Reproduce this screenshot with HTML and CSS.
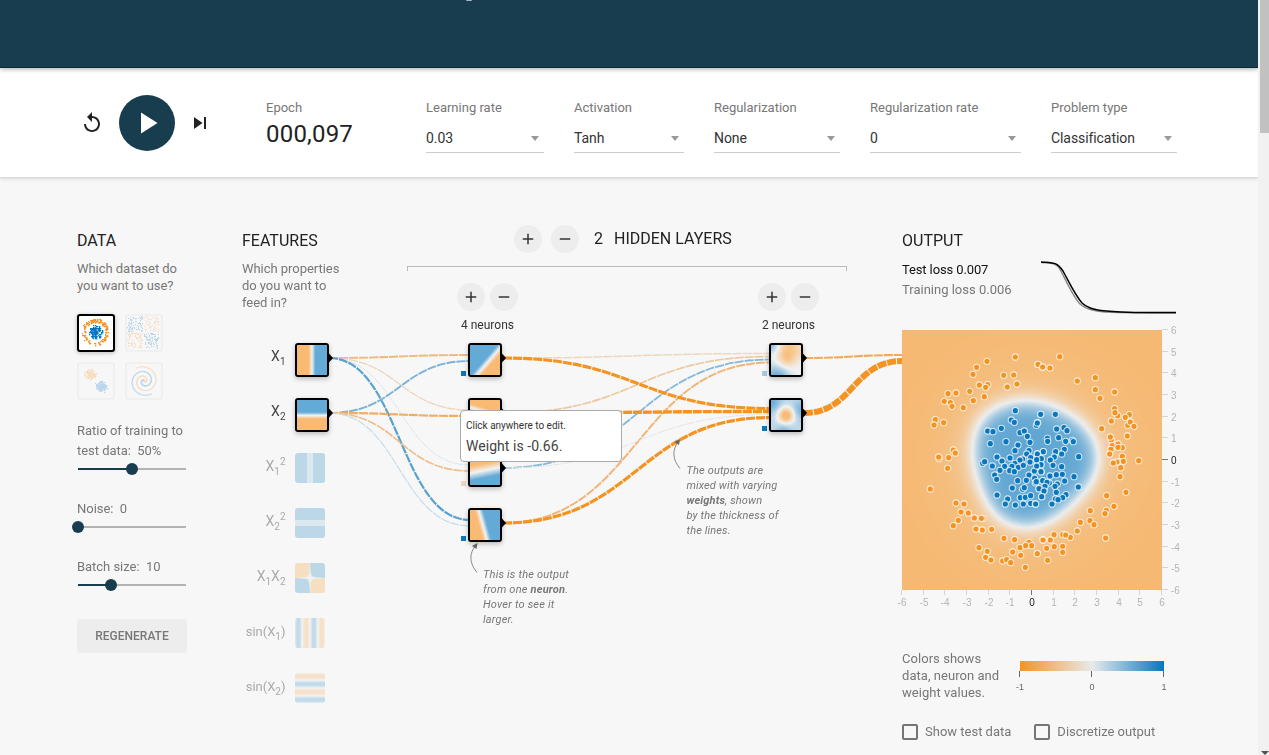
FILE: index.html
```html
<!DOCTYPE html>
<html lang="en">
<head>
<meta charset="utf-8">
<title>Neural network playground</title>
<link rel="stylesheet" href="styles.css">
</head>
<body>
<div class="page">
  <div class="content">
    <header class="banner"><span class="banner-tail"></span></header>

    <section class="controls">
      <div class="timeline">
        <svg class="icon" viewBox="0 0 24 24"><path d="M12 5V1L7 6l5 5V7c3.31 0 6 2.690 6 6s-2.690 6-6 6-6-2.690-6-6H4c0 4.420 3.580 8 8 8s8-3.580 8-8-3.580-8-8-8z"/></svg>
        <div class="play"><svg viewBox="0 0 24 24"><path d="M8 5v14l11-7z"/></svg></div>
        <svg class="icon skip" viewBox="0 0 24 24"><path d="M6 18l8.500-6L6 6v12zM16 6v12h2V6h-2z"/></svg>
      </div>
      <div class="epoch"><span class="label">Epoch</span><span class="epoch-value">000,097</span></div>
      <div class="selects">
        <div class="control w-rate"><span class="label">Learning rate</span><div class="select">0.03<i class="caret"></i></div></div>
        <div class="control w-act"><span class="label">Activation</span><div class="select">Tanh<i class="caret"></i></div></div>
        <div class="control w-reg"><span class="label">Regularization</span><div class="select">None<i class="caret"></i></div></div>
        <div class="control w-regrate"><span class="label">Regularization rate</span><div class="select">0<i class="caret"></i></div></div>
        <div class="control w-type"><span class="label">Problem type</span><div class="select">Classification<i class="caret"></i></div></div>
      </div>
    </section>

    <main class="main">
      <section class="data">
        <h4>Data</h4>
        <p>Which dataset do you want to use?</p>
        <div class="datasets">
          <canvas class="dataset selected" data-set="circle" width="34" height="34"></canvas>
          <canvas class="dataset" data-set="xor" width="34" height="34"></canvas>
          <canvas class="dataset" data-set="gauss" width="34" height="34"></canvas>
          <canvas class="dataset" data-set="spiral" width="34" height="34"></canvas>
        </div>
        <div class="slider-block"><label>Ratio of training to test data:&nbsp; 50%</label><div class="slider"><div class="fill" style="width:50%"></div><div class="knob"></div></div></div>
        <div class="slider-block"><label>Noise:&nbsp; 0</label><div class="slider"><div class="fill" style="width:0%"></div><div class="knob"></div></div></div>
        <div class="slider-block"><label>Batch size:&nbsp; 10</label><div class="slider"><div class="fill" style="width:31%"></div><div class="knob"></div></div></div>
        <button class="regenerate">Regenerate</button>
      </section>

      <section class="network">
        <div class="network-head">
          <div class="features-head">
            <h4>Features</h4>
            <p>Which properties do you want to feed in?</p>
          </div>
          <div class="layers-head">
            <div class="layers-title">
              <span class="round"><svg viewBox="0 0 24 24"><path d="M19 13h-6v6h-2v-6H5v-2h6V5h2v6h6v2z"/></svg></span>
              <span class="round"><svg viewBox="0 0 24 24"><path d="M19 13H5v-2h14v2z"/></svg></span>
              <h4 class="count">2</h4><h4>Hidden layers</h4>
            </div>
            <div class="bracket"></div>
            <div class="layer-controls">
              <div class="layer-control">
                <div class="pair">
                  <span class="round small"><svg viewBox="0 0 24 24"><path d="M19 13h-6v6h-2v-6H5v-2h6V5h2v6h6v2z"/></svg></span>
                  <span class="round small"><svg viewBox="0 0 24 24"><path d="M19 13H5v-2h14v2z"/></svg></span>
                </div>
                <span>4 neurons</span>
              </div>
              <div class="layer-control">
                <div class="pair">
                  <span class="round small"><svg viewBox="0 0 24 24"><path d="M19 13h-6v6h-2v-6H5v-2h6V5h2v6h6v2z"/></svg></span>
                  <span class="round small"><svg viewBox="0 0 24 24"><path d="M19 13H5v-2h14v2z"/></svg></span>
                </div>
                <span>2 neurons</span>
              </div>
            </div>
          </div>
        </div>
        <div class="diagram">
          <svg class="links" width="660" height="420" viewBox="242 335 660 420">
            <g id="links"></g>
            <g id="marks"></g>
            <g class="feature-label">
              <text x="285.500" y="361" text-anchor="end">X<tspan class="sub" dy="4">1</tspan></text>
              <text x="285.500" y="416" text-anchor="end">X<tspan class="sub" dy="4">2</tspan></text>
              <g class="off">
                <text x="285.500" y="471" text-anchor="end">X<tspan class="sub" dy="4">1</tspan><tspan class="sub" dy="-10">2</tspan></text>
                <text x="285.500" y="526" text-anchor="end">X<tspan class="sub" dy="4">2</tspan><tspan class="sub" dy="-10">2</tspan></text>
                <text x="285.500" y="581" text-anchor="end">X<tspan class="sub" dy="4">1</tspan><tspan dy="-4">X</tspan><tspan class="sub" dy="4">2</tspan></text>
                <text x="285.500" y="636" text-anchor="end" class="sin">sin(X<tspan class="sub" dy="4">1</tspan><tspan dy="-4">)</tspan></text>
                <text x="285.500" y="691" text-anchor="end" class="sin">sin(X<tspan class="sub" dy="4">2</tspan><tspan dy="-4">)</tspan></text>
              </g>
            </g>
            <g class="arrow">
              <path d="M477 572.500C469 563 469 553 476 545"/><path class="head" d="M477.500 543l-1 6-4.500-3z"/>
              <path d="M680 468.500C672 459 672 449 679 441"/><path class="head" d="M680 439l-1 6-4.500-3z"/>
            </g>
          </svg>
          <div id="nodes"></div>
          <div class="callout neuron-note">This is the output<br>from one <b>neuron</b>.<br>Hover to see it<br>larger.</div>
          <div class="callout weight-note">The outputs are<br>mixed with varying<br><b>weights</b>, shown<br>by the thickness of<br>the lines.</div>
          <div class="hovercard"><span>Click anywhere to edit.</span><span class="value">Weight is -0.66.</span></div>
        </div>
      </section>

      <section class="output">
        <h4>Output</h4>
        <div class="loss">
          <div class="loss-text"><span class="test">Test loss 0.007</span><span>Training loss 0.006</span></div>
          <svg class="loss-chart" width="136" height="54" viewBox="0 0 136 54">
            <path class="train" d="M0 2.500C12 3 16 3 20 11C27 25 33 38 39 44C46 50 54 51 64 52C90 53 110 53 135 53"/>
            <path class="test" d="M0 2C13 3 16 2 22 11C29 24 34 35 41 43C48 50 60 51 80 52C100 53 115 52.500 135 52.500"/>
          </svg>
        </div>
        <div class="plot">
          <canvas id="heatmap" width="130" height="130"></canvas>
          <svg class="plot-overlay" width="290" height="285" viewBox="0 0 290 285"><g id="points"></g><g id="axes"></g></svg>
        </div>
        <div class="legend">
          <p>Colors shows data, neuron and weight values.</p>
          <svg width="160" height="38" viewBox="0 0 160 38">
            <defs><linearGradient id="scale"><stop offset="0" stop-color="#f59322"/><stop offset=".5" stop-color="#e8eaeb"/><stop offset="1" stop-color="#0877bd"/></linearGradient></defs>
            <rect x="8" y="4" width="144" height="10" fill="url(#scale)"/>
            <path d="M7.500 14v6M79.500 14v6M151.500 14v6" stroke="#666"/>
            <text x="8" y="33">-1</text><text x="80" y="33">0</text><text x="152" y="33">1</text>
          </svg>
        </div>
        <div class="checks">
          <span class="check"><i></i>Show test data</span>
          <span class="check"><i></i>Discretize output</span>
        </div>
      </section>
    </main>
  </div>
  <div class="scrollbar"><div class="thumb"></div><div class="down"></div></div>
</div>
<script src="script.js"></script>
</body>
</html>
```
FILE: styles.css
```css
* { box-sizing: border-box; }
body { margin: 0; font-family: Roboto, "Liberation Sans", sans-serif; font-size: 13px; color: #777; background: #f7f7f7; overflow: hidden; }
h4 { margin: 0; font-weight: 400; font-size: 16px; line-height: 20px; color: #222; text-transform: uppercase; }
p { margin: 0; line-height: 17px; }
.page { display: flex; height: 755px; }
.content { flex: 1; display: flex; flex-direction: column; min-width: 0; }

.banner { height: 68px; background: #183d4e; border-bottom: 1px solid #0d2a38; box-shadow: 0 1px 5px rgba(0,0,0,.35); position: relative; z-index: 2; }
.banner-tail { display: block; width: 6px; height: 1px; margin-left: 466px; background: #a9b6bd; border-radius: 0 0 3px 3px; }

.controls { height: 110px; display: flex; background: #fff; border-bottom: 1px solid #d9d9d9; box-shadow: 0 1px 4px rgba(0,0,0,.12); position: relative; padding-left: 80px; }
.timeline { width: 186px; height: 110px; display: flex; align-items: center; }
.icon { width: 24px; height: 24px; fill: #222; }
.icon.skip { margin-left: 13px; }
.play { width: 56px; height: 56px; margin-left: 15px; border-radius: 50%; background: #183d4e; display: flex; align-items: center; justify-content: center; }
.play svg { width: 36px; height: 36px; fill: #fff; margin-left: -1px; }
.label { display: block; line-height: 16px; color: #777; }
.epoch { width: 160px; padding-top: 32px; }
.epoch-value { display: block; font-size: 24px; line-height: 28px; margin-top: 4px; color: #222; letter-spacing: .2px; font-weight: 400; }
.selects { display: flex; gap: 30px; padding-top: 32px; }
.select { display: flex; align-items: center; justify-content: space-between; height: 30px; margin-top: 7px; border-bottom: 1px solid #ccc; color: #333; font-size: 14px; letter-spacing: -.08px; padding: 1px 5px 0 0; }
.caret { border: 4.500px solid transparent; border-top-color: #999; border-bottom: 0; border-top-width: 5px; margin-top: 1px; }
.w-rate { width: 118px; } .w-act { width: 110px; } .w-reg { width: 126px; } .w-regrate { width: 151px; } .w-type { width: 126px; }

.main { flex: 1; display: grid; grid-template-columns: 110px 660px 276px; padding: 53px 0 0 77px; min-height: 0; }
.data { width: 110px; }
.data p, .features-head p { margin-top: 9px; letter-spacing: -.04px; }
.datasets { display: grid; grid-template-columns: 38px 38px; gap: 10px; margin-top: 20px; }
.dataset { width: 38px; height: 38px; border: 2px solid #d8d8d8; border-radius: 3px; opacity: .25; }
.dataset.selected { opacity: 1; border-color: #000; background: #fff; box-shadow: 0 1px 4px rgba(0,0,0,.25); }
.slider-block { height: 58px; }
.datasets + .slider-block { margin-top: 21px; height: 78px; }
label { display: block; line-height: 20px; width: 112px; letter-spacing: -.03px; }
.slider { display: flex; align-items: center; height: 12px; margin: 2px 0 0 1px; width: 108px; background: linear-gradient(#b3b3b3, #b3b3b3) center / 100% 2px no-repeat; }
.fill { height: 2px; background: #183d4e; }
.knob { width: 12px; height: 12px; margin: 0 -6px; border-radius: 50%; background: #183d4e; flex: none; }
.regenerate { display: block; width: 110px; height: 34px; margin-top: 4px; border: 0; border-radius: 2px; background: #ededed; color: #777; font: 500 12px Roboto, sans-serif; text-transform: uppercase; }

.network { margin-left: 55px; }
.network-head { height: 104px; display: flex; }
.features-head { width: 165px; }
.features-head p { width: 104px; }
.layers-head { width: 440px; margin-top: -6px; }
.layers-title { display: flex; align-items: center; height: 28px; padding-left: 107px; }
.round { flex: none; width: 28px; height: 28px; border-radius: 50%; background: #ededed; display: flex; align-items: center; justify-content: center; margin-right: 9px; }
.round svg { width: 18px; height: 18px; fill: #333; }
.round.small { margin: 0; }
.count { margin: 0 11px 0 6px; }
.bracket { height: 5px; margin-top: 13px; border: 1px solid #bbb; border-bottom: 0; }
.layer-controls { display: flex; justify-content: space-between; padding: 12px 28px 0 50px; color: #444; font-size: 12px; text-align: center; }
.layer-control { width: 61px; white-space: nowrap; }
.layer-control > span { display: block; line-height: 14px; margin-top: 7px; color: #333; }
.pair { display: flex; gap: 5px; justify-content: center; }
.diagram { position: relative; width: 660px; height: 420px; }
.links { position: absolute; left: 0; top: 0; overflow: visible; }
#links path { fill: none; stroke-dasharray: 9 1; }
.feature-label { font-size: 14px; fill: #444; }
.sub { font-size: 10px; }
.sin { font-size: 13px; }
.off { fill: #aaa; }
.arrow path { fill: none; stroke: #888; }
.arrow .head { fill: #666; stroke: none; }
.node { position: absolute; width: 34px; height: 34px; border: 2px solid #000; border-radius: 3px; box-shadow: 0 2px 5px rgba(0,0,0,.25); background: #fff; }
.node.off-node { width: 30px; height: 30px; border: 0; box-shadow: none; opacity: .4; background: none; }
.callout { position: absolute; font: italic 11px/15px Roboto, sans-serif; letter-spacing: .14px; color: #777; white-space: nowrap; }
.neuron-note { left: 241px; top: 232px; letter-spacing: .2px; }
.weight-note { left: 444.500px; top: 128px; }
.hovercard { position: absolute; left: 218px; top: 75px; width: 162px; height: 52px; padding: 7px 5px; border: 1px solid #aaa; border-radius: 4px; background: #fff; color: #333; font-size: 10px; line-height: 16px; }
.hovercard span { display: block; }
.hovercard .value { font-size: 14px; line-height: 24px; color: #444; letter-spacing: .05px; }

.output { margin-left: 55px; width: 276px; }
.loss { display: flex; justify-content: space-between; height: 79px; padding-top: 9px; }
.loss-text { line-height: 20px; white-space: nowrap; }
.loss-text span { display: block; }
.loss-text .test { color: #111; letter-spacing: -.12px; }
.loss-chart { margin: 0 1px 0 0; }
.loss-chart path { fill: none; stroke-width: 1.500; }
.loss-chart .train { stroke: #888; }
.loss-chart .test { stroke: #000; }
.plot { display: grid; width: 290px; height: 285px; }
.plot > * { grid-area: 1 / 1; }
#heatmap { width: 260px; height: 260px; }
.plot-overlay { overflow: visible; }
#axes text { font: 10px "Liberation Sans", sans-serif; fill: #b5b5b5; }
#axes line { stroke: #d5d5d5; }
#axes text.zero { fill: #222; }
#axes line.zero { stroke: #777; }
#points circle { stroke: #fff; stroke-opacity: .75; stroke-width: 1.100; }
.legend { display: flex; gap: 10px; padding-top: 35px; height: 88px; }
.legend p { width: 100px; letter-spacing: .05px; }
.legend svg { margin-top: 7px; font: 9px "Liberation Sans", sans-serif; fill: #666; text-anchor: middle; }
.checks { display: flex; gap: 22px; margin-top: 20px; }
.check { display: flex; align-items: center; gap: 7px; height: 18px; white-space: nowrap; line-height: 16px; padding-right: 1px; }
.check i { width: 16px; height: 16px; border: 2px solid #757575; border-radius: 2px; }

.scrollbar { width: 11px; background: #f1f1f1; display: flex; flex-direction: column; justify-content: space-between; align-items: flex-end; z-index: 3; }
.thumb { width: 9px; height: 133px; background: #c1c1c1; }
.down { border: 4px solid transparent; border-top-color: #505050; border-bottom: 0; }
```
FILE: script.js
```javascript
const NS = 'http://www.w3.org/2000/svg';
const LOW = [245, 147, 34], MID = [232, 234, 235], HIGH = [8, 119, 189];

function add(parent, name, attrs, text) {
  const el = document.createElementNS(NS, name);
  for (const k in attrs) el.setAttribute(k, attrs[k]);
  if (text !== undefined) el.textContent = text;
  parent.appendChild(el);
  return el;
}
function color(v) {
  v = Math.max(-1, Math.min(1, v));
  const end = v < 0 ? LOW : HIGH;
  return MID.map((m, i) => m + (end[i] - m) * Math.abs(v));
}
// Paints f(x, y) with x and y in [-6, 6], y pointing up.
function paint(canvas, f) {
  const n = canvas.width, ctx = canvas.getContext('2d'), img = ctx.createImageData(n, n);
  for (let j = 0; j < n; j++) for (let i = 0; i < n; i++) {
    const c = color(f((i + .5) / n * 12 - 6, 6 - (j + .5) / n * 12)), p = (j * n + i) * 4;
    img.data[p] = c[0]; img.data[p + 1] = c[1]; img.data[p + 2] = c[2]; img.data[p + 3] = 160;
  }
  ctx.putImageData(img, 0, 0);
}
const g = (x, y, cx, cy, s) => Math.exp(-((x - cx) ** 2 + (y - cy) ** 2) / (s * s));

// Nodes: left, top, response function, active flag.
const nodes = [
  [295, 343, (x) => x * .75, 1], [295, 398, (x, y) => (y + .2) * .75, 1],
  [295, 453, (x) => Math.abs(x) < 1.3 ? .4 : 1, 0],
  [295, 508, (x, y) => Math.abs(y) < 1.3 ? .4 : 1, 0],
  [295, 563, (x, y) => x * y * .8, 0],
  [295, 618, (x) => Math.sin(x) * .9, 0], [295, 673, (x, y) => Math.sin(y) * .9, 0],
  [468, 343, (x, y) => (y - x * 1.15 + 2.1) * .42, 1],
  [468, 398, (x, y) => -(y + x * .3 - 1.1) * .6, 1],
  [468, 453, (x, y) => -(y - x * .2 + .2) * .35, 1],
  [468, 508, (x, y) => (x + y * .28 + .8) * .6, 1],
  [769, 343, (x, y) => -.8 * g(x, y, .3, .8, 3.8) - .6 * g(x, y, 1, 6, 4) - .3 * g(x, y, 6, 4, 3.5) + .65 * g(x, y, -6, -7, 6) + .5 * g(x, y, -2, -7, 4) + .75 * g(x, y, -6, 6, 3), 1],
  [769, 398, (x, y) => .35 - 1.6 * g(x, y, 0, -.1, 3.1) + .6 * g(x, y, -6, 5, 4) + .5 * g(x, y, 6, 2, 3.5) + .5 * g(x, y, -1, -7, 3), 1]
];
const host = document.getElementById('nodes'), marks = document.getElementById('marks');
for (const [x, y, f, on] of nodes) {
  const c = document.createElement('canvas');
  c.width = c.height = 30;
  c.className = on ? 'node' : 'node off-node';
  c.style.left = (x - 242) + 'px';
  c.style.top = (y - 335) + 'px';
  host.appendChild(c);
  paint(c, f);
  if (on) add(marks, 'path', { d: `M${x + 33} ${y + 10.5}l1 0 4 4.500-4 4.500-1 0z`, fill: '#000' });
}
for (const [x, y, c] of [[461, 371, '#0877bd'], [461, 481, '#ecd9c4'], [461, 536, '#0877bd'], [762, 371, '#a5cbe1'], [762, 426, '#0877bd']])
  add(marks, 'rect', { x, y, width: 5, height: 5, fill: c });

// Links: x0, y0, x1, y1, colour, width.
const links = [
  [329, 358, 470, 355, '#efb87c', 1.9], [329, 358, 470, 410, '#edd4b8', 1.3], [329, 358, 470, 465, '#dce3e7', 1], [329, 358, 470, 520, '#59a1cf', 2.200],
  [329, 413, 470, 361, '#7bb3d6', 1.9], [329, 413, 470, 416, '#f1ad64', 2.200], [329, 413, 470, 471, '#efbf8b', 1.700], [329, 413, 470, 526, '#c5dbe8', 1.200],
  [503, 358, 771, 353.5, '#eed7bf', 1.500], [503, 413, 771, 356.5, '#ecc9a2', 1.700], [503, 468, 771, 359.5, '#84b8d9', 1.800], [503, 523, 771, 362.5, '#f0b577', 2],
  [503, 358, 771, 408.5, '#f59322', 3.100], [503, 413, 771, 411.500, '#f59322', 3.400], [503, 468, 771, 414.5, '#e1e6e6', 1], [503, 523, 771, 417.5, '#f59322', 3.200],
  [804, 358, 902, 355, '#f1aa58', 2.100], [804, 413, 902, 361, '#f59322', 6]
];
for (const [a, b, c, d, stroke, w] of links) {
  const m = (a + c) / 2;
  add(document.getElementById('links'), 'path', { d: `M${a} ${b}C${m} ${b} ${m} ${d} ${c} ${d}`, stroke, 'stroke-width': w });
}

// Decision boundary, in plot pixels.
const edge = [[130, 71], [100, 75], [83, 85], [75, 97], [71, 118], [75, 145], [83, 168], [96, 188], [114, 197], [135, 197], [153, 188], [176, 168], [193, 145], [197, 125], [190, 105], [173, 88], [153, 77]]
  .map(([x, y]) => [Math.atan2(y - 130, x - 130), Math.hypot(x - 130, y - 130)]).sort((a, b) => a[0] - b[0]);
function radius(t) {
  let i = edge.findIndex(e => e[0] > t);
  const n = edge.length;
  if (i < 0) i = 0;
  const a = edge[(i + n - 1) % n], b = edge[i], turn = 2 * Math.PI;
  const span = (b[0] - a[0] + turn) % turn, k = ((t - a[0] + turn) % turn) / span;
  return a[1] + (b[1] - a[1]) * k;
}
paint(document.getElementById('heatmap'), (x, y) => {
  const px = x / 12 * 260, py = -y / 12 * 260, t = Math.atan2(py, px);
  let r = 0;
  for (let k = -3; k <= 3; k++) {
    let a = t + k * .07;
    if (a > Math.PI) a -= 2 * Math.PI;
    if (a < -Math.PI) a += 2 * Math.PI;
    r += radius(a) / 7;
  }
  const d = r - Math.hypot(px, py);
  if (d > 0) return Math.tanh(d / 12);
  return -(.78 * Math.tanh(-d / 11) + .2 * Math.tanh(-d / 40));
});

// Samples, in thirds of a pixel, for the left and right part of the plot.
const orangeLeft = [[361,96],[276,109],[245,127],[234,148],[326,151],[356,150],[428,118],[442,127],[366,177],[337,186],[278,179],[272,187],[253,180],[224,199],[268,215],[235,227],[183,204],[159,206],[148,229],[166,233],[171,244],[205,248],[121,284],[117,300],[146,293],[175,375],[181,384],[161,398],[132,401],[131,396],[158,430],[106,492],[183,534],[207,537],[198,561],[220,564],[190,586],[175,602],[238,579],[264,580],[259,580],[243,612],[262,615],[290,613],[327,640],[359,644],[402,652],[444,645],[252,668],[277,679],[272,697],[288,705],[323,708],[335,704],[347,713],[353,681],[375,668],[377,691],[392,662],[410,662],[427,685],[391,727]];
const orangeRight = [[74,95],[9,118],[23,126],[45,129],[127,168],[181,158],[181,194],[239,201],[195,220],[239,251],[248,272],[240,263],[283,269],[271,277],[229,288],[278,301],[286,291],[297,304],[200,311],[277,333],[229,345],[226,336],[232,362],[249,357],[262,368],[228,373],[224,387],[249,367],[262,394],[265,409],[246,411],[235,414],[257,428],[311,407],[255,455],[273,502],[215,512],[237,544],[214,556],[210,566],[166,557],[165,587],[177,599],[136,592],[127,618],[106,637],[83,629],[92,630],[57,629],[46,645],[24,645],[58,665],[83,664],[83,682],[35,670],[7,686],[38,706],[212,639]];
const blueLeft = [[361,257],[437,268],[349,285],[358,292],[428,293],[424,301],[319,310],[278,318],[294,320],[375,323],[388,318],[397,334],[286,356],[333,350],[405,352],[369,360],[360,377],[402,377],[395,387],[427,387],[445,380],[306,396],[345,399],[383,402],[407,398],[321,408],[263,415],[269,410],[360,415],[375,405],[405,411],[292,423],[329,424],[351,424],[370,427],[385,421],[426,422],[438,402],[438,418],[315,436],[344,437],[358,440],[418,438],[439,440],[299,450],[305,463],[402,450],[368,467],[394,466],[419,460],[421,473],[444,467],[352,489],[383,493],[388,488],[432,491],[447,497],[306,510],[338,522],[331,537],[376,518],[391,517],[407,512],[440,515],[361,540],[385,537],[407,535],[421,537]];
const blueRight = [[61,268],[17,268],[7,294],[65,312],[87,308],[96,317],[71,338],[37,340],[38,349],[92,349],[112,346],[115,350],[88,373],[62,380],[80,387],[25,380],[7,387],[58,396],[131,395],[46,405],[19,401],[54,421],[18,419],[80,425],[18,440],[82,448],[45,453],[64,449],[117,455],[23,467],[43,474],[36,472],[89,468],[67,477],[30,484],[60,484],[130,486],[12,491],[27,498],[64,502],[93,509],[20,515],[83,518],[61,522],[69,524],[51,537],[2,537],[5,423],[4,470],[5,404]];
const points = document.getElementById('points');
function scatter(list, dx, fill) {
  for (const [x, y] of list) add(points, 'circle', { cx: (x + dx) / 3, cy: (y - 15) / 3, r: 3.1, fill });
}
scatter(blueLeft, -21, '#0877bd'); scatter(blueRight, 399, '#0877bd');
scatter(orangeLeft, -21, '#f59322'); scatter(orangeRight, 399, '#f59322');

const axes = document.getElementById('axes');
for (let v = -6; v <= 6; v++) {
  const p = Math.round((v + 6) * 260 / 12) - .5, q = 259 - p, cls = v ? '' : 'zero';
  add(axes, 'line', { x1: p, x2: p, y1: 260, y2: 265, class: cls });
  add(axes, 'text', { x: p + .5, y: 276, 'text-anchor': 'middle', class: cls }, v);
  add(axes, 'line', { x1: 260, x2: 266, y1: q, y2: q, class: cls });
  add(axes, 'text', { x: 269, y: q + 4, class: cls }, v);
}

// Dataset thumbnails.
let seed = 7;
const rnd = () => (seed = (seed * 16807) % 2147483647) / 2147483647;
const bell = () => (rnd() + rnd() + rnd() + rnd() - 2) * 1.7;
const makers = {
  circle: i => { const a = rnd() * 6.283, r = i % 2 ? rnd() * 7 : 10 + rnd() * 3.500; return [Math.cos(a) * r, Math.sin(a) * r, i % 2]; },
  xor: () => { const x = rnd() * 30 - 15, y = rnd() * 30 - 15; return [x + Math.sign(x) * .6, y + Math.sign(y) * .6, x * y > 0]; },
  gauss: i => i % 2 ? [6 + bell() * 2.300, 6 + bell() * 2.300, 1] : [-5 + bell() * 2.300, -6 + bell() * 2.300, 0],
  spiral: i => { const k = (i >> 1) / 150, a = k * 10 + (i % 2 ? 3.142 : 0); return [Math.sin(a) * k * 15, Math.cos(a) * k * 15, i % 2]; }
};
for (const c of document.querySelectorAll('.dataset')) {
  const ctx = c.getContext('2d'), set = c.dataset.set;
  const size = set === 'gauss' ? 1.3 : set === 'circle' ? 1.3 : 1.1;
  for (let i = 0; i < 300; i++) {
    const [x, y, blue] = makers[set](i);
    ctx.fillStyle = blue ? '#0877bd' : '#f59322';
    if (set === 'spiral') ctx.fillRect(16.500 + x, 16.500 + y, 1.100, 1.100);
    else ctx.fillRect(Math.round(16 + x), Math.round(16 + y), size, size);
  }
}
```
